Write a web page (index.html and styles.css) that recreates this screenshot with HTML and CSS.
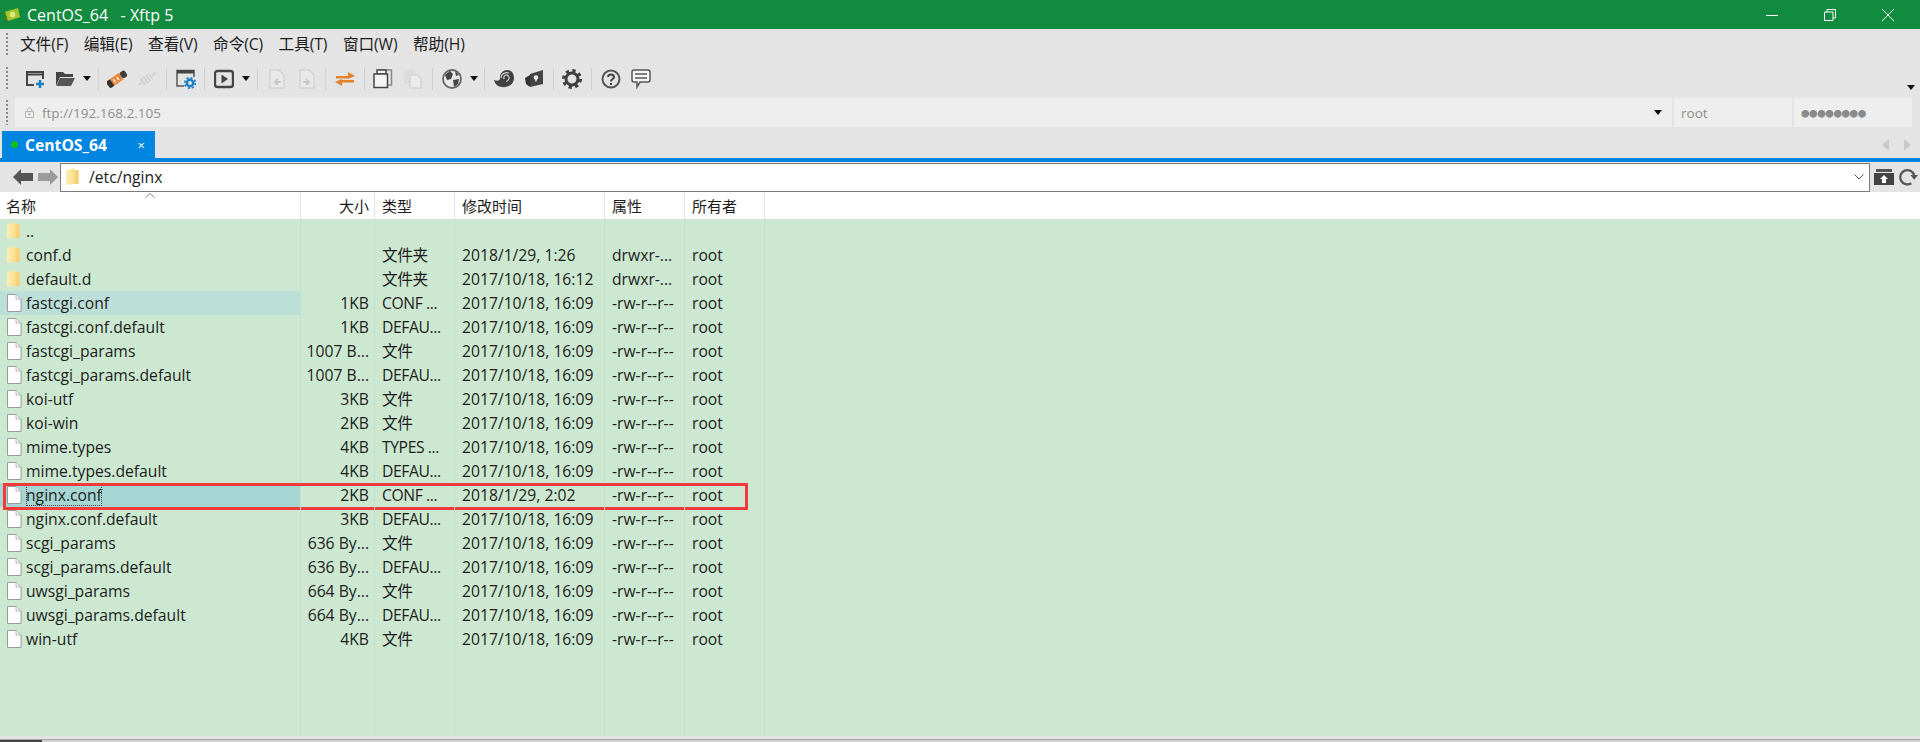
FILE: index.html
```html
<!DOCTYPE html>
<html lang="en">
<head>
    <meta charset="UTF-8">
    <title>CentOS_64 - Xftp 5</title>
    <link rel="stylesheet" href="styles.css">
</head>
<body>
    <svg class="defs">
        <defs>
            <linearGradient id="folderFill" x1="0" x2="1" y1="0" y2="0">
                <stop offset="0" stop-color="#fdeeb8"/>
                <stop offset=".6" stop-color="#fbe08e"/>
                <stop offset="1" stop-color="#f3c964"/>
            </linearGradient>
        </defs>
        <symbol id="folder" viewBox="0 0 15 18">
            <path d="M0 2 L8 0.500 L8 2 L12.500 2 L12.500 16 L8 16 L1 17 L0 16 Z" fill="url(#folderFill)"/>
            <path d="M9 2 H12.500 V16 H9 Z" fill="#f6d37a"/>
        </symbol>
        <symbol id="file" viewBox="0 0 15 18">
            <path d="M.5 .5 H9 L14 5 V17.500 H.5 Z" fill="#fff" stroke="#9a9a9a"/>
            <path d="M9 .5 V5 H14" fill="#eee" stroke="#bbb"/>
        </symbol>
        <symbol id="caret" viewBox="0 0 8 5">
            <path d="M0 0 H8 L4 5 Z" fill="#111"/>
        </symbol>
    </svg>

    <div class="titlebar">
        <svg class="app-icon" viewBox="0 0 18 16"><path d="M1 5 L15 1 L17 11 L4 15 Z" fill="#a5c32a"/><circle cx="9" cy="8" r="3" fill="#dbe87a"/><path d="M1 5 L4 15 L2 15 L0 7 Z" fill="#5d7a14"/></svg>
        <span class="title-text">CentOS_64 &nbsp; - Xftp 5</span>
        <div class="win-controls">
            <svg viewBox="0 0 12 12"><path d="M0 6.500 H12" stroke="#fff"/></svg>
            <svg viewBox="0 0 12 12"><path d="M.5 3 H9 V11.500 H.5 Z M3 3 V.5 H11.500 V9 H9" fill="none" stroke="#fff"/></svg>
            <svg viewBox="0 0 12 12"><path d="M0 0 L12 12 M12 0 L0 12" stroke="#fff"/></svg>
        </div>
    </div>

    <div class="menubar">
        <div class="grip"></div>
        <span class="menu-item">文件(F)</span>
        <span class="menu-item">编辑(E)</span>
        <span class="menu-item">查看(V)</span>
        <span class="menu-item">命令(C)</span>
        <span class="menu-item">工具(T)</span>
        <span class="menu-item">窗口(W)</span>
        <span class="menu-item">帮助(H)</span>
    </div>

    <div class="toolbar">
        <div class="grip"></div>
        <div class="tools">
            <span class="tool"><svg viewBox="0 0 20 20"><path d="M9 16 H2 V3 H18 V10 M2 5.500 H18" fill="none" stroke="#444" stroke-width="2"/><path d="M15 11 V19 M11 15 H19" stroke="#1b7fc4" stroke-width="2.500"/></svg></span>
            <span class="tool"><svg viewBox="0 0 20 20"><path d="M1 3 H8 L10 5 H18 V8 H5 L1 17 Z" fill="#444"/><path d="M5 9 H20 L16 17 H1.500 Z" fill="#555"/></svg></span>
            <svg class="tool-caret"><use href="#caret"/></svg>
            <span class="tool-sep"></span>
            <span class="tool"><svg viewBox="0 0 20 20"><g transform="rotate(-35 10 10)"><rect x="-1" y="6" width="6" height="8" rx="2" fill="#333"/><rect x="4" y="6" width="11" height="8" fill="#e8863a"/><rect x="15" y="6.500" width="6" height="7" rx="2" fill="#3c3c3c"/><path d="M7 8 V12 M11 8 V12" stroke="#fff" stroke-width="1.200"/></g></svg></span>
            <span class="tool tool-off"><svg viewBox="0 0 20 20"><g transform="rotate(-35 10 10)"><rect x="0" y="9" width="4" height="2" fill="#d2d2d2"/><rect x="4" y="6" width="11" height="8" rx="1" fill="#d2d2d2"/><rect x="15" y="9" width="6" height="2" fill="#d2d2d2"/><path d="M7 6 V14 M10 6 V14 M13 6 V14" stroke="#e6e6e6"/></g></svg></span>
            <span class="tool-sep"></span>
            <span class="tool"><svg viewBox="0 0 20 20"><path d="M8 17 H1 V1.500 H18 V8" fill="none" stroke="#555" stroke-width="1.500"/><rect x="1" y="1" width="17" height="3.500" fill="#444"/><circle cx="14" cy="14" r="3.200" fill="none" stroke="#1b7fc4" stroke-width="2.400"/><circle cx="14" cy="14" r="5.200" fill="none" stroke="#1b7fc4" stroke-width="1.800" stroke-dasharray="2.040 2.040"/></svg></span>
            <span class="tool-sep"></span>
            <span class="tool"><svg viewBox="0 0 20 20"><rect x="1" y="2" width="18" height="16" rx="2.500" fill="none" stroke="#444" stroke-width="2.400"/><path d="M7.500 5.500 L14 10 L7.500 14.500 Z" fill="#444"/></svg></span>
            <svg class="tool-caret"><use href="#caret"/></svg>
            <span class="tool-sep"></span>
            <span class="tool tool-off"><svg viewBox="0 0 20 20"><path d="M3 1 H12 L17 6 V19 H3 Z" fill="#e9e9e9" stroke="#d2d2d2" stroke-width="1.500"/><path d="M14 13 H9 M11 10 L8 13 L11 16" fill="none" stroke="#c8c8c8" stroke-width="2"/></svg></span>
            <span class="tool tool-off"><svg viewBox="0 0 20 20"><path d="M3 1 H12 L17 6 V19 H3 Z" fill="#e9e9e9" stroke="#d2d2d2" stroke-width="1.500"/><path d="M6 13 H11 M9 10 L12 13 L9 16" fill="none" stroke="#c8c8c8" stroke-width="2"/></svg></span>
            <span class="tool-sep"></span>
            <span class="tool"><svg viewBox="0 0 20 20"><path d="M1 7 H13 V9.500 H1 Z M13 3 L20 7 L13 10 Z" fill="#e8812c"/><path d="M7 11 H19 V13.500 H7 Z M7 10 L0 13 L7 17 Z" fill="#e8812c"/></svg></span>
            <span class="tool-sep"></span>
            <span class="tool"><svg viewBox="0 0 20 20"><path d="M6 1 H18.500 V16 H15" fill="none" stroke="#888" stroke-width="1.500"/><path d="M4 1 H13 V5 H4 Z" fill="#f4f4f4" stroke="#444" stroke-width="1.500"/><path d="M1 5 H14.500 V18.500 H1 Z" fill="#f4f4f4" stroke="#444" stroke-width="1.500"/></svg></span>
            <span class="tool tool-off"><svg viewBox="0 0 20 20"><path d="M1 1 H12 V15 H1 Z" fill="#dcdcdc"/><path d="M7 6 H14 L18 10 V19 H7 Z" fill="#ececec" stroke="#d4d4d4" stroke-width="1.500"/></svg></span>
            <span class="tool-sep"></span>
            <span class="tool"><svg viewBox="0 0 20 20"><circle cx="10" cy="10" r="9" fill="#e8e8e8" stroke="#666" stroke-width="1.800"/><path d="M3 6 L8 2 L11 5 L9 10 L5 11 Z M11 11 L17 10 L16 15 L12 18 Z M13 2 L17 6 L14 7 Z" fill="#444"/></svg></span>
            <svg class="tool-caret"><use href="#caret"/></svg>
            <span class="tool-sep"></span>
            <span class="tool"><svg viewBox="0 0 20 20"><path d="M0 11 C3 12 5 12 6 10 C5 5 9 1 13 1 C18 1 20 5 20 9 C20 15 14 19 8 18 C4 18 1 15 0 11 Z" fill="#414141"/><path d="M10 10 C9 7 12 5 14 6.500 C16 8 15 12 12 12.500 M7 9 C7 4 12 3 15 4" fill="none" stroke="#cfcfcf" stroke-width="1.200"/></svg></span>
            <span class="tool"><svg viewBox="0 0 20 20"><path d="M6 5 L19 1 V15 L6 18 Z" fill="#444"/><path d="M1 9 L6 6 V18 L2 15 Z" fill="#333"/><circle cx="12" cy="8.500" r="2.300" fill="#eee"/><path d="M11.300 9 H12.700 V12.500 H11.300 Z" fill="#eee"/></svg></span>
            <span class="tool-sep"></span>
            <span class="tool"><svg viewBox="0 0 20 20"><circle cx="10" cy="10" r="6" fill="none" stroke="#3f3f3f" stroke-width="3"/><circle cx="10" cy="10" r="8.500" fill="none" stroke="#3f3f3f" stroke-width="3" stroke-dasharray="3.340 3.340"/></svg></span>
            <span class="tool-sep"></span>
            <span class="tool"><svg viewBox="0 0 20 20"><circle cx="10" cy="10" r="8.500" fill="none" stroke="#555" stroke-width="2"/><path d="M7 8 C7 4.500 13 4.500 13 8 C13 10 10 10 10 12.500" fill="none" stroke="#444" stroke-width="2"/><rect x="9" y="14" width="2" height="2" fill="#444"/></svg></span>
            <span class="tool"><svg viewBox="0 0 20 20"><path d="M3 1 H17 Q19 1 19 3 V11 Q19 13 17 13 H9 L6 18 V13 H3 Q1 13 1 11 V3 Q1 1 3 1 Z" fill="#f4f4f4" stroke="#555" stroke-width="1.500"/><path d="M4 5 H16 M4 9 H16" stroke="#555" stroke-width="1.500"/></svg></span>
        </div>
        <svg class="toolbar-more"><use href="#caret"/></svg>
    </div>

    <div class="addressbar">
        <div class="grip"></div>
        <div class="addr-box addr-url">
            <svg class="lock" viewBox="0 0 10 12"><path d="M2.500 5 V3 C2.500 0.500 7.500 0.500 7.500 3 V5" fill="none" stroke="#aaa"/><path d="M.5 5 H9.500 V11.500 H.5 Z" fill="none" stroke="#aaa"/><rect x="4" y="7" width="2" height="2" fill="#aaa"/></svg>
            <span>ftp://192.168.2.105</span>
            <svg class="addr-caret"><use href="#caret"/></svg>
        </div>
        <div class="addr-box addr-small">root</div>
        <div class="addr-box addr-small addr-dots">●●●●●●●●</div>
    </div>

    <div class="tabbar">
        <div class="tab">
            <span class="tab-dot"></span>
            <span class="tab-name">CentOS_64</span>
            <span class="tab-close">×</span>
        </div>
        <div class="tab-arrows">
            <svg viewBox="0 0 7 12"><path d="M7 0 V12 L0 6 Z" fill="#c8c8c8"/></svg>
            <svg viewBox="0 0 7 12"><path d="M0 0 V12 L7 6 Z" fill="#c8c8c8"/></svg>
        </div>
    </div>

    <div class="pathbar">
        <svg class="nav-arrow" viewBox="0 0 20 16"><path d="M0 8 L8 0 V4 H20 V12 H8 V16 Z" fill="#555"/></svg>
        <svg class="nav-arrow" viewBox="0 0 20 16"><path d="M20 8 L12 0 V4 H0 V12 H12 V16 Z" fill="#9a9a9a"/></svg>
        <div class="path-input">
            <svg class="row-icon"><use href="#folder"/></svg>
            <span class="path-text">/etc/nginx</span>
            <svg class="path-chevron" viewBox="0 0 10 6"><path d="M.5 .5 L5 5 L9.500 .5" fill="none" stroke="#555"/></svg>
        </div>
        <svg class="path-btn" viewBox="0 0 20 16"><path d="M0 4 H20 V16 H0 Z" fill="#444"/><path d="M2 0 H18 V3 H2 Z" fill="#555"/><path d="M10 6 L14 10 H12 V14 H8 V10 H6 Z" fill="#fff"/></svg>
        <svg class="path-btn" viewBox="0 0 21 20"><path d="M14 16.500 A7.500 7.500 0 1 1 17 8" fill="none" stroke="#555" stroke-width="2.400"/><path d="M13 8 H21 L17 13 Z" fill="#555"/></svg>
    </div>

    <div class="listhead">
        <div class="col-name">名称</div>
        <div class="col-size">大小</div>
        <div class="col-type">类型</div>
        <div class="col-time">修改时间</div>
        <div class="col-attr">属性</div>
        <div class="col-owner">所有者</div>
        <svg class="sort-mark" viewBox="0 0 10 5"><path d="M.5 4.500 L5 .5 L9.500 4.500" fill="none" stroke="#888"/></svg>
    </div>

    <div class="filelist">
        <div class="row"><div class="col-name"><svg class="row-icon"><use href="#folder"/></svg>..</div><div class="col-size"></div><div class="col-type"></div><div class="col-time"></div><div class="col-attr"></div><div class="col-owner"></div></div>
        <div class="row"><div class="col-name"><svg class="row-icon"><use href="#folder"/></svg>conf.d</div><div class="col-size"></div><div class="col-type">文件夹</div><div class="col-time">2018/1/29, 1:26</div><div class="col-attr">drwxr-...</div><div class="col-owner">root</div></div>
        <div class="row"><div class="col-name"><svg class="row-icon"><use href="#folder"/></svg>default.d</div><div class="col-size"></div><div class="col-type">文件夹</div><div class="col-time">2017/10/18, 16:12</div><div class="col-attr">drwxr-...</div><div class="col-owner">root</div></div>
        <div class="row row-hover"><div class="col-name"><svg class="row-icon"><use href="#file"/></svg>fastcgi.conf</div><div class="col-size">1KB</div><div class="col-type">CONF ...</div><div class="col-time">2017/10/18, 16:09</div><div class="col-attr">-rw-r--r--</div><div class="col-owner">root</div></div>
        <div class="row"><div class="col-name"><svg class="row-icon"><use href="#file"/></svg>fastcgi.conf.default</div><div class="col-size">1KB</div><div class="col-type">DEFAU...</div><div class="col-time">2017/10/18, 16:09</div><div class="col-attr">-rw-r--r--</div><div class="col-owner">root</div></div>
        <div class="row"><div class="col-name"><svg class="row-icon"><use href="#file"/></svg>fastcgi_params</div><div class="col-size">1007 B...</div><div class="col-type">文件</div><div class="col-time">2017/10/18, 16:09</div><div class="col-attr">-rw-r--r--</div><div class="col-owner">root</div></div>
        <div class="row"><div class="col-name"><svg class="row-icon"><use href="#file"/></svg>fastcgi_params.default</div><div class="col-size">1007 B...</div><div class="col-type">DEFAU...</div><div class="col-time">2017/10/18, 16:09</div><div class="col-attr">-rw-r--r--</div><div class="col-owner">root</div></div>
        <div class="row"><div class="col-name"><svg class="row-icon"><use href="#file"/></svg>koi-utf</div><div class="col-size">3KB</div><div class="col-type">文件</div><div class="col-time">2017/10/18, 16:09</div><div class="col-attr">-rw-r--r--</div><div class="col-owner">root</div></div>
        <div class="row"><div class="col-name"><svg class="row-icon"><use href="#file"/></svg>koi-win</div><div class="col-size">2KB</div><div class="col-type">文件</div><div class="col-time">2017/10/18, 16:09</div><div class="col-attr">-rw-r--r--</div><div class="col-owner">root</div></div>
        <div class="row"><div class="col-name"><svg class="row-icon"><use href="#file"/></svg>mime.types</div><div class="col-size">4KB</div><div class="col-type">TYPES ...</div><div class="col-time">2017/10/18, 16:09</div><div class="col-attr">-rw-r--r--</div><div class="col-owner">root</div></div>
        <div class="row"><div class="col-name"><svg class="row-icon"><use href="#file"/></svg>mime.types.default</div><div class="col-size">4KB</div><div class="col-type">DEFAU...</div><div class="col-time">2017/10/18, 16:09</div><div class="col-attr">-rw-r--r--</div><div class="col-owner">root</div></div>
        <div class="row row-selected"><div class="col-name"><svg class="row-icon"><use href="#file"/></svg><span class="focus-name">nginx.conf</span></div><div class="col-size">2KB</div><div class="col-type">CONF ...</div><div class="col-time">2018/1/29, 2:02</div><div class="col-attr">-rw-r--r--</div><div class="col-owner">root</div><div class="red-box"></div></div>
        <div class="row"><div class="col-name"><svg class="row-icon"><use href="#file"/></svg>nginx.conf.default</div><div class="col-size">3KB</div><div class="col-type">DEFAU...</div><div class="col-time">2017/10/18, 16:09</div><div class="col-attr">-rw-r--r--</div><div class="col-owner">root</div></div>
        <div class="row"><div class="col-name"><svg class="row-icon"><use href="#file"/></svg>scgi_params</div><div class="col-size">636 By...</div><div class="col-type">文件</div><div class="col-time">2017/10/18, 16:09</div><div class="col-attr">-rw-r--r--</div><div class="col-owner">root</div></div>
        <div class="row"><div class="col-name"><svg class="row-icon"><use href="#file"/></svg>scgi_params.default</div><div class="col-size">636 By...</div><div class="col-type">DEFAU...</div><div class="col-time">2017/10/18, 16:09</div><div class="col-attr">-rw-r--r--</div><div class="col-owner">root</div></div>
        <div class="row"><div class="col-name"><svg class="row-icon"><use href="#file"/></svg>uwsgi_params</div><div class="col-size">664 By...</div><div class="col-type">文件</div><div class="col-time">2017/10/18, 16:09</div><div class="col-attr">-rw-r--r--</div><div class="col-owner">root</div></div>
        <div class="row"><div class="col-name"><svg class="row-icon"><use href="#file"/></svg>uwsgi_params.default</div><div class="col-size">664 By...</div><div class="col-type">DEFAU...</div><div class="col-time">2017/10/18, 16:09</div><div class="col-attr">-rw-r--r--</div><div class="col-owner">root</div></div>
        <div class="row"><div class="col-name"><svg class="row-icon"><use href="#file"/></svg>win-utf</div><div class="col-size">4KB</div><div class="col-type">文件</div><div class="col-time">2017/10/18, 16:09</div><div class="col-attr">-rw-r--r--</div><div class="col-owner">root</div></div>
        <div class="row row-fill"><div class="col-name"></div><div class="col-size"></div><div class="col-type"></div><div class="col-time"></div><div class="col-attr"></div><div class="col-owner"></div></div>
    </div>

    <div class="statusline"></div>
    <div class="hscroll"><div class="hscroll-thumb"></div></div>
</body>
</html>
```

FILE: styles.css
```css
* {
    margin: 0;
    padding: 0;
    box-sizing: border-box;
}

html, body {
    height: 742px;
    overflow: hidden;
}

body {
    display: flex;
    flex-direction: column;
    background: #e4e4e4;
    color: #1c1c1c;
    font-family: "Open Sans", "Noto Sans CJK SC", sans-serif;
    font-size: 15.700px;
}

.defs {
    display: block;
    width: 0;
    height: 0;
}

/* title bar */
.titlebar {
    display: flex;
    align-items: center;
    height: 29px;
    flex: none;
    padding-left: 4px;
    background: #118b3f;
    color: #fff;
    font-size: 16px;
}

.app-icon {
    width: 17px;
    height: 15px;
    margin-right: 6px;
}

.win-controls {
    display: flex;
    gap: 46px;
    margin-left: auto;
    padding-right: 26px;
}

.win-controls svg {
    width: 12px;
    height: 12px;
}

/* menu + toolbars */
.grip {
    width: 2px;
    margin-left: 6px;
    background: repeating-linear-gradient(#888 0 2px, transparent 2px 4px);
}

.menubar {
    display: flex;
    align-items: center;
    gap: 15.500px;
    height: 31px;
    flex: none;
}

.menubar .grip {
    height: 23px;
    margin-right: -3.500px;
}

.menu-item {
    font-size: 15.700px;
    letter-spacing: -.1px;
    line-height: 31px;
}

.toolbar {
    display: flex;
    align-items: center;
    height: 37px;
    flex: none;
}

.toolbar .grip {
    height: 23px;
}

.tools {
    display: flex;
    align-items: center;
    margin-left: 12px;
}

.tool {
    display: flex;
    justify-content: center;
    width: 30px;
}

.tool svg {
    width: 20px;
    height: 20px;
}

.tool-caret {
    width: 8px;
    height: 5px;
    margin: 0 3px;
}

.tool-sep {
    width: 1px;
    height: 22px;
    margin: 0 3.700px;
    background: #cfcfcf;
}

.toolbar-more {
    width: 8px;
    height: 5px;
    margin: 18px 5px 0 auto;
}

.addressbar {
    display: flex;
    align-items: stretch;
    gap: 2px;
    height: 29px;
    margin-top: 1px;
    flex: none;
    color: #8f8f8f;
    font-size: 13.500px;
}

.addressbar .grip {
    height: 25px;
    margin: 2px 5px 0 6px;
}

.addr-box {
    display: flex;
    align-items: center;
    background: #eeeeee;
}

.addr-url {
    flex: 1;
    padding-left: 10px;
}

.lock {
    width: 9px;
    height: 11px;
    margin-right: 8px;
}

.addr-caret {
    width: 8px;
    height: 5px;
    margin: 0 10px 0 auto;
}

.addr-small {
    width: 118px;
    padding-left: 7px;
}

.addr-dots {
    margin-right: 8px;
    font-size: 8.500px;
    letter-spacing: -.4px;
    color: #8a8a8a;
}

/* tabs */
.tabbar {
    display: flex;
    align-items: flex-end;
    height: 35px;
    flex: none;
    padding-left: 2px;
    border-bottom: 4px solid #0086e0;
}

.tab {
    display: flex;
    align-items: center;
    width: 153px;
    height: 27px;
    padding-left: 9px;
    background: #0086e0;
    color: #fff;
}

.tab-dot {
    width: 7px;
    height: 7px;
    margin-right: 7px;
    border-radius: 50%;
    background: #10c010;
}

.tab-name {
    font-weight: 700;
}

.tab-close {
    margin-left: auto;
    margin-right: 10px;
    font-size: 13px;
}

.tab-arrows {
    display: flex;
    gap: 15px;
    margin: 0 9px 7px auto;
}

.tab-arrows svg {
    width: 7px;
    height: 12px;
}

/* path bar */
.pathbar {
    display: flex;
    align-items: center;
    height: 30px;
    flex: none;
    padding-left: 13px;
}

.nav-arrow {
    width: 20px;
    height: 16px;
    margin-right: 5px;
}

.nav-arrow + .nav-arrow {
    margin-right: 2px;
}

.path-input {
    display: flex;
    align-items: center;
    flex: 1;
    height: 29px;
    border: 1.500px solid #7a7a7a;
    border-top-width: 1px;
    background: #fff;
    padding-left: 5px;
}

.path-input .row-icon {
    margin-right: 8px;
}

.path-chevron {
    width: 10px;
    height: 6px;
    margin: 0 5px 0 auto;
}

.path-btn {
    width: 20px;
    height: 20px;
    margin-left: 4px;
}

.path-btn:last-child {
    margin-right: 2px;
}

/* list */
.listhead,
.row {
    display: grid;
    grid-template-columns: 301px 74px 80px 150px 80px 80px;
    align-items: stretch;
}

.listhead {
    position: relative;
    height: 27px;
    flex: none;
    background: #fff;
    font-size: 15px;
    line-height: 28px;
}

.listhead > div {
    padding-left: 7px;
    border-right: 1px solid #e4e4e4;
}

.listhead > .col-name {
    padding-left: 6px;
}

.listhead > .col-size {
    padding: 0 5px 0 0;
    text-align: right;
}

.sort-mark {
    position: absolute;
    left: 145px;
    top: 1px;
    width: 10px;
    height: 5px;
}

.filelist {
    display: flex;
    flex-direction: column;
    flex: 1;
    background: #cde8d0;
}

.row {
    position: relative;
    height: 24px;
    line-height: 24px;
    white-space: nowrap;
}

.row > div {
    padding-left: 7px;
    border-right: 1px solid #c3e0d0;
}

.row > .col-name {
    display: flex;
    align-items: center;
    padding-left: 7px;
}

.row > .col-size {
    padding: 0 5px 0 0;
    text-align: right;
}

.row > .col-type {
    letter-spacing: -.4px;
}

.row-fill {
    flex: 1;
}

.row-icon {
    width: 15px;
    height: 18px;
    margin-right: 4px;
    flex: none;
}

.row-hover > .col-name {
    background: #bcdfd8;
}

.row-selected > .col-name {
    background: #a5d6d3;
}

.focus-name {
    outline: 1px dotted #444;
    outline-offset: -1px;
    line-height: 22px;
}

.row > .red-box {
    position: absolute;
    left: 3px;
    top: 0;
    width: 745px;
    height: 27px;
    padding: 0;
    border: 3px solid #f33a3a;
}

.statusline {
    height: 3px;
    flex: none;
    background: #e4e4e4;
    border-bottom: 1px solid #a8a8a8;
    box-sizing: content-box;
}

.hscroll {
    height: 2px;
    flex: none;
    background: #d0d0d0;
}

.hscroll-thumb {
    width: 42px;
    height: 2px;
    background: #444;
}
```
